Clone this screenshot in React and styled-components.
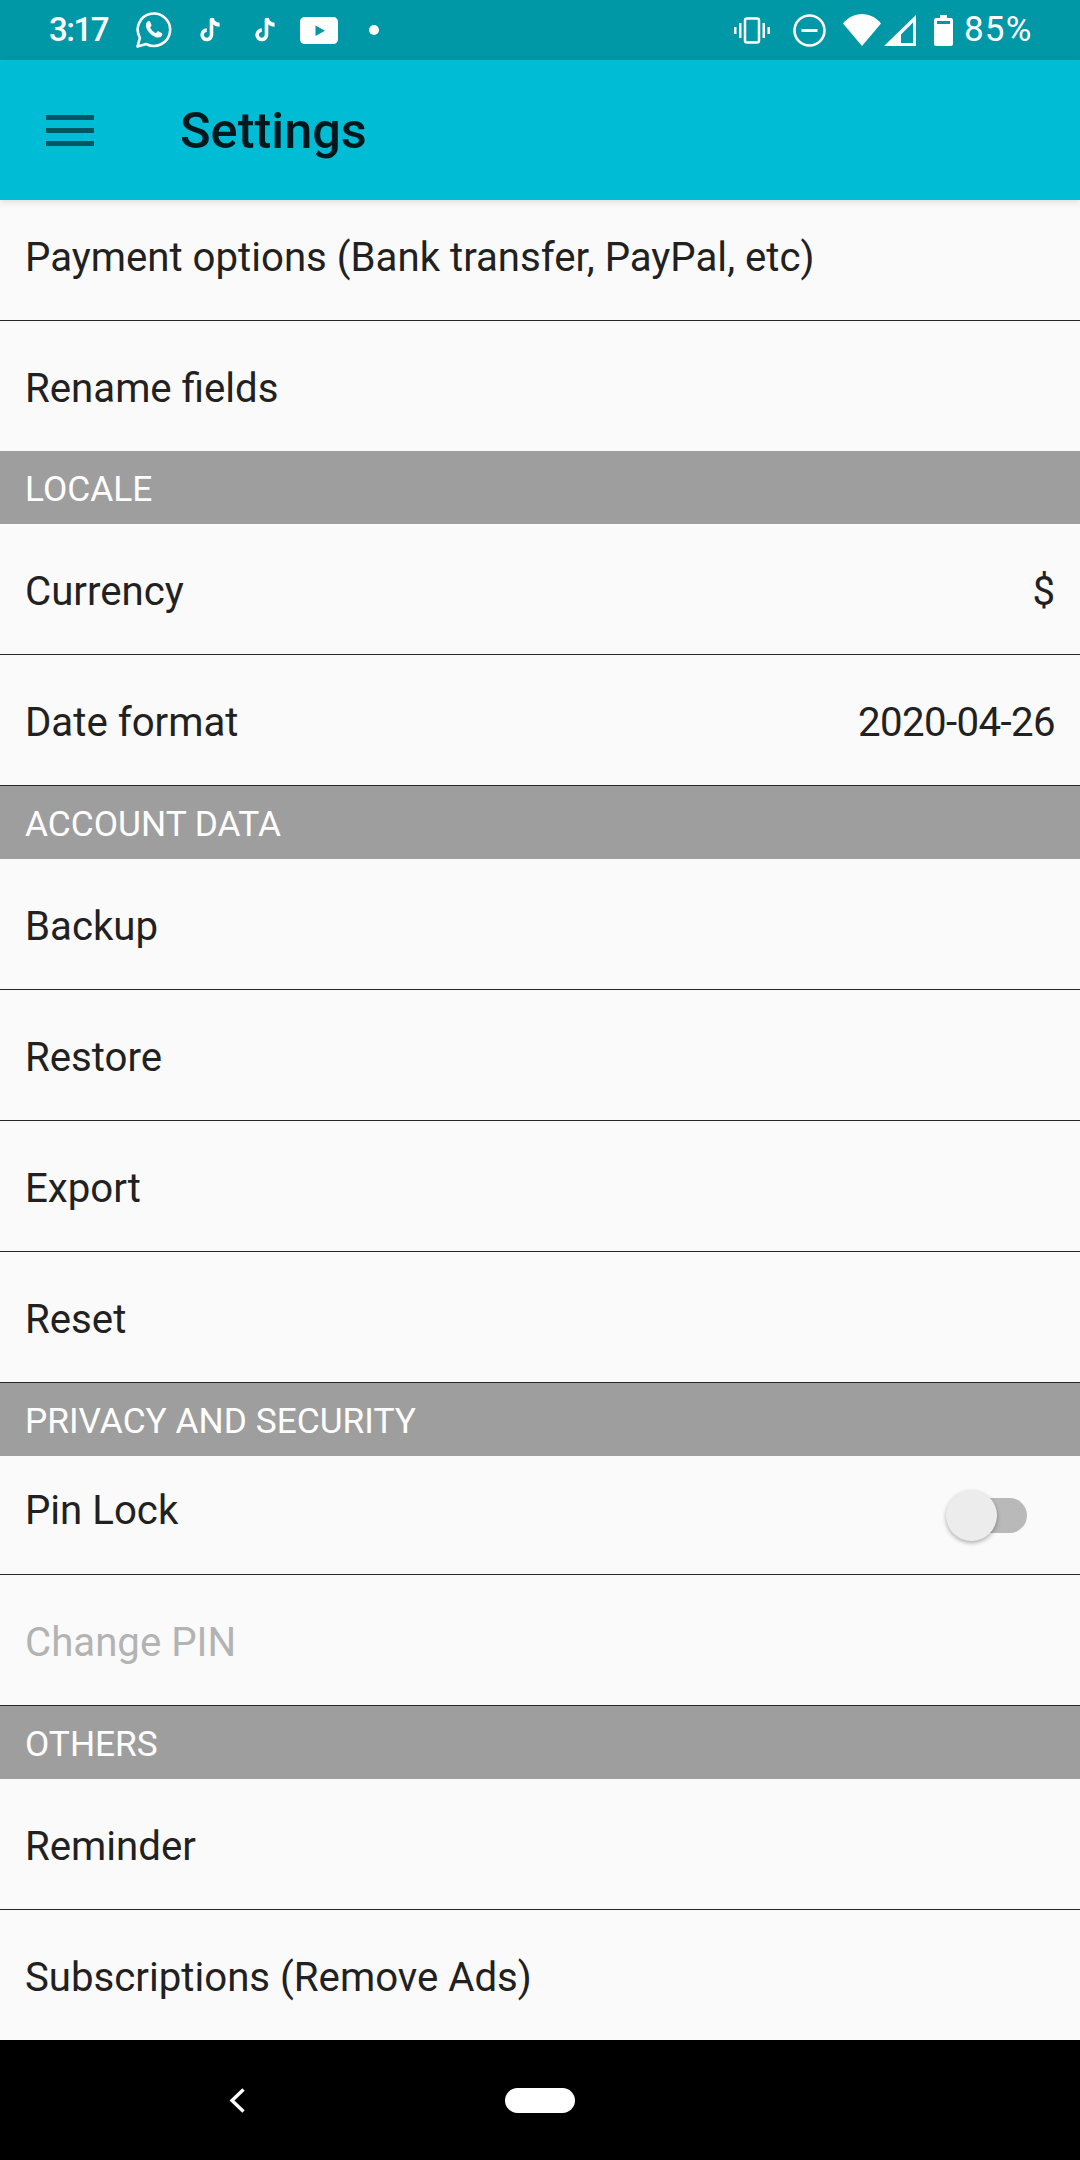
import React from 'react';
import styled, { createGlobalStyle } from 'styled-components';

const GlobalStyle = createGlobalStyle`
  html, body {
    margin: 0;
    padding: 0;
    background: #fafafa;
  }
  body {
    font-family: Roboto, "Liberation Sans", sans-serif;
  }
  * {
    box-sizing: border-box;
  }
`;

const Screen = styled.div`
  width: 1080px;
  height: 2160px;
  display: flex;
  flex-direction: column;
  overflow: hidden;
  background: #fafafa;
`;

const StatusBar = styled.div`
  height: 60px;
  flex: none;
  display: flex;
  align-items: center;
  justify-content: space-between;
  padding: 0 48px 0 49px;
  background: #0097a7;
  color: #fff;
`;

const StatusGroup = styled.div`
  display: flex;
  align-items: center;
`;

const StatusText = styled.span`
  width: ${(p) => p.$width}px;
  margin-left: ${(p) => p.$left || 0}px;
  font-size: ${(p) => p.$size || 33}px;
  font-weight: ${(p) => p.$weight || 400};
  line-height: 60px;
  letter-spacing: ${(p) => p.$spacing || 0}px;
  white-space: nowrap;
`;

const IconSlot = styled.svg`
  display: block;
  flex: none;
  margin-left: ${(p) => p.$left || 0}px;
  fill: #fff;
`;

const Toolbar = styled.header`
  height: 140px;
  flex: none;
  display: flex;
  align-items: center;
  padding-left: 46px;
  gap: 86px;
  background: #00bcd4;
  box-shadow: 0 2px 7px rgba(0, 0, 0, 0.12);
  position: relative;
  z-index: 1;
`;

const Burger = styled.div`
  width: 48px;
  height: 31px;
  display: flex;
  flex-direction: column;
  justify-content: space-between;
  span {
    display: block;
    height: 5px;
    background: #005662;
  }
`;

const Title = styled.h1`
  margin: 0;
  font-size: 50.5px;
  font-weight: 500;
  color: #02181c;
`;

const List = styled.main`
  flex: 1;
  display: flex;
  flex-direction: column;
`;

const Row = styled.div`
  height: ${(p) => p.$height || 131}px;
  flex: none;
  display: flex;
  align-items: center;
  justify-content: space-between;
  padding: ${(p) => p.$top ?? 4}px 25px ${(p) => p.$bottom || 0}px;
  border-bottom: ${(p) => (p.$plain ? 'none' : '1px solid #262626')};
  font-size: 40.2px;
  color: ${(p) => (p.$disabled ? '#b3b3b3' : '#212121')};
`;

const DateValue = styled.span`
  letter-spacing: -0.6px;
`;

const PinLabel = styled.span`
  margin-bottom: 10px;
`;

const SectionHeader = styled.div`
  height: 73px;
  flex: none;
  display: flex;
  align-items: center;
  padding: 2px 0 0 25px;
  background: #9e9e9e;
  color: #fff;
  font-size: 35.3px;
`;

const SwitchWrap = styled.div`
  position: relative;
  width: 81px;
  height: 51px;
  margin-right: 28px;
`;

const SwitchTrack = styled.div`
  position: absolute;
  right: 0;
  top: 8px;
  width: 60px;
  height: 35px;
  border-radius: 18px;
  background: #b9b9b9;
`;

const SwitchThumb = styled.div`
  position: absolute;
  left: 0;
  top: 0;
  width: 51px;
  height: 51px;
  border-radius: 50%;
  background: #ececec;
  box-shadow: 0 2px 4px rgba(0, 0, 0, 0.3);
`;

const NavBar = styled.nav`
  height: 120px;
  flex: none;
  display: flex;
  align-items: center;
  padding-left: 229px;
  background: #000;
`;

const HomePill = styled.div`
  width: 70px;
  height: 25px;
  margin-left: 260px;
  border-radius: 13px;
  background: #fff;
`;

const WhatsApp = () => (
  <IconSlot $left={29} width="36" height="36" viewBox="0 0 36 36">
    <path
      d="M1.5 34.5l2.4-8.6A16.2 16.2 0 1 1 10.2 32z"
      fill="none"
      stroke="#fff"
      strokeWidth="2.6"
      strokeLinejoin="round"
    />
    <path d="M11.6 9.6c.8-.7 2-.8 2.5.2l1.3 2.9c.3.6 0 1.2-.4 1.7l-.9 1c1.3 2.6 3.3 4.5 5.9 5.8l1.2-1.4c.4-.5 1-.6 1.6-.3l2.8 1.4c.9.5.9 1.4.5 2.4-.8 1.8-3 2.6-5 2.1-5-1.2-9.8-5.8-11-10.5-.4-1.900 0-4.200 1.500-5.300z" />
  </IconSlot>
);

const TikTok = ({ left }) => (
  <IconSlot $left={left} width="20" height="24" viewBox="0 0 20 24">
    <path
      d="M11.500 1v15.800a4.700 4.700 0 1 1-4.700-4.700"
      fill="none"
      stroke="#fff"
      strokeWidth="3.600"
    />
    <path d="M10 0h4c.2 2.800 2.200 4.600 5.600 4.800v4C16.500 8.800 14.500 7.700 13 6z" />
  </IconSlot>
);

const YouTube = () => (
  <IconSlot $left={25} width="38" height="27" viewBox="0 0 38 27">
    <path
      fillRule="evenodd"
      d="M5 0h28c3 0 5 2 5 5v17c0 3-2 5-5 5H5c-3 0-5-2-5-5V5c0-3 2-5 5-5zM15.500 8.500v10.500l9.500-5.200z"
    />
  </IconSlot>
);

const Dot = () => (
  <IconSlot $left={31} width="10" height="10" viewBox="0 0 10 10">
    <circle cx="5" cy="5" r="5" />
  </IconSlot>
);

const Vibrate = () => (
  <IconSlot width="36" height="27" viewBox="0 0 36 27">
    <rect x="11" y="1.500" width="14" height="24" rx="2" fill="none" stroke="#fff" strokeWidth="2.500" />
    <path d="M5 6h2.500v15H5zM28.500 6H31v15h-2.500zM0 10h2.500v7H0zM33.500 10H36v7h-2.500z" />
  </IconSlot>
);

const DoNotDisturb = () => (
  <IconSlot $left={23} width="33" height="33" viewBox="0 0 33 33">
    <circle cx="16.500" cy="16.500" r="15" fill="none" stroke="#fff" strokeWidth="2.600" />
    <rect x="8.500" y="15" width="16" height="3" />
  </IconSlot>
);

const Wifi = () => (
  <IconSlot $left={17} width="38" height="32" viewBox="0 0 38 32">
    <path d="M0 9.500C5 3.500 11.500 0 19 0s14 3.500 19 9.500L19 32z" />
  </IconSlot>
);

const Signal = () => (
  <IconSlot $left={3} width="32" height="31" viewBox="0 0 32 31">
    <path
      fillRule="evenodd"
      d="M32 0v31H0zM29 7.500L17 19.500v8.500h12z"
    />
  </IconSlot>
);

const Battery = () => (
  <IconSlot $left={18} width="19" height="31" viewBox="0 0 19 31">
    <path
      fillRule="evenodd"
      d="M6 0h7v3h4c1 0 2 1 2 2v24c0 1-1 2-2 2H2c-1 0-2-1-2-2V5c0-1 1-2 2-2h4zM3 6v3h13V6z"
    />
  </IconSlot>
);

const Back = () => (
  <svg width="16" height="25" viewBox="0 0 16 25">
    <path d="M14.500 1.500L3 12.500 14.500 23.500" fill="none" stroke="#fff" strokeWidth="3.400" />
  </svg>
);

function App() {
  return (
    <Screen>
      <GlobalStyle />
      <StatusBar>
        <StatusGroup>
          <StatusText $width={58} $weight={500} $spacing={-1.5}>3:17</StatusText>
          <WhatsApp />
          <TikTok left={28} />
          <TikTok left={35} />
          <YouTube />
          <Dot />
        </StatusGroup>
        <StatusGroup>
          <Vibrate />
          <DoNotDisturb />
          <Wifi />
          <Signal />
          <Battery />
          <StatusText $width={68} $left={11} $size={35} $spacing={1.2}>85%</StatusText>
        </StatusGroup>
      </StatusBar>
      <Toolbar>
        <Burger>
          <span />
          <span />
          <span />
        </Burger>
        <Title>Settings</Title>
      </Toolbar>
      <List>
        <Row $height={121} $top={0} $bottom={6}>Payment options (Bank transfer, PayPal, etc)</Row>
        <Row $height={130} $plain>Rename fields</Row>
        <SectionHeader>LOCALE</SectionHeader>
        <Row>
          <span>Currency</span>
          <span>$</span>
        </Row>
        <Row>
          <span>Date format</span>
          <DateValue>2020-04-26</DateValue>
        </Row>
        <SectionHeader>ACCOUNT DATA</SectionHeader>
        <Row>Backup</Row>
        <Row>Restore</Row>
        <Row>Export</Row>
        <Row>Reset</Row>
        <SectionHeader>PRIVACY AND SECURITY</SectionHeader>
        <Row $height={119} $top={0}>
          <PinLabel>Pin Lock</PinLabel>
          <SwitchWrap>
            <SwitchTrack />
            <SwitchThumb />
          </SwitchWrap>
        </Row>
        <Row $disabled>Change PIN</Row>
        <SectionHeader>OTHERS</SectionHeader>
        <Row>Reminder</Row>
        <Row $height={130} $plain>Subscriptions (Remove Ads)</Row>
      </List>
      <NavBar>
        <Back />
        <HomePill />
      </NavBar>
    </Screen>
  );
}

export default App;
